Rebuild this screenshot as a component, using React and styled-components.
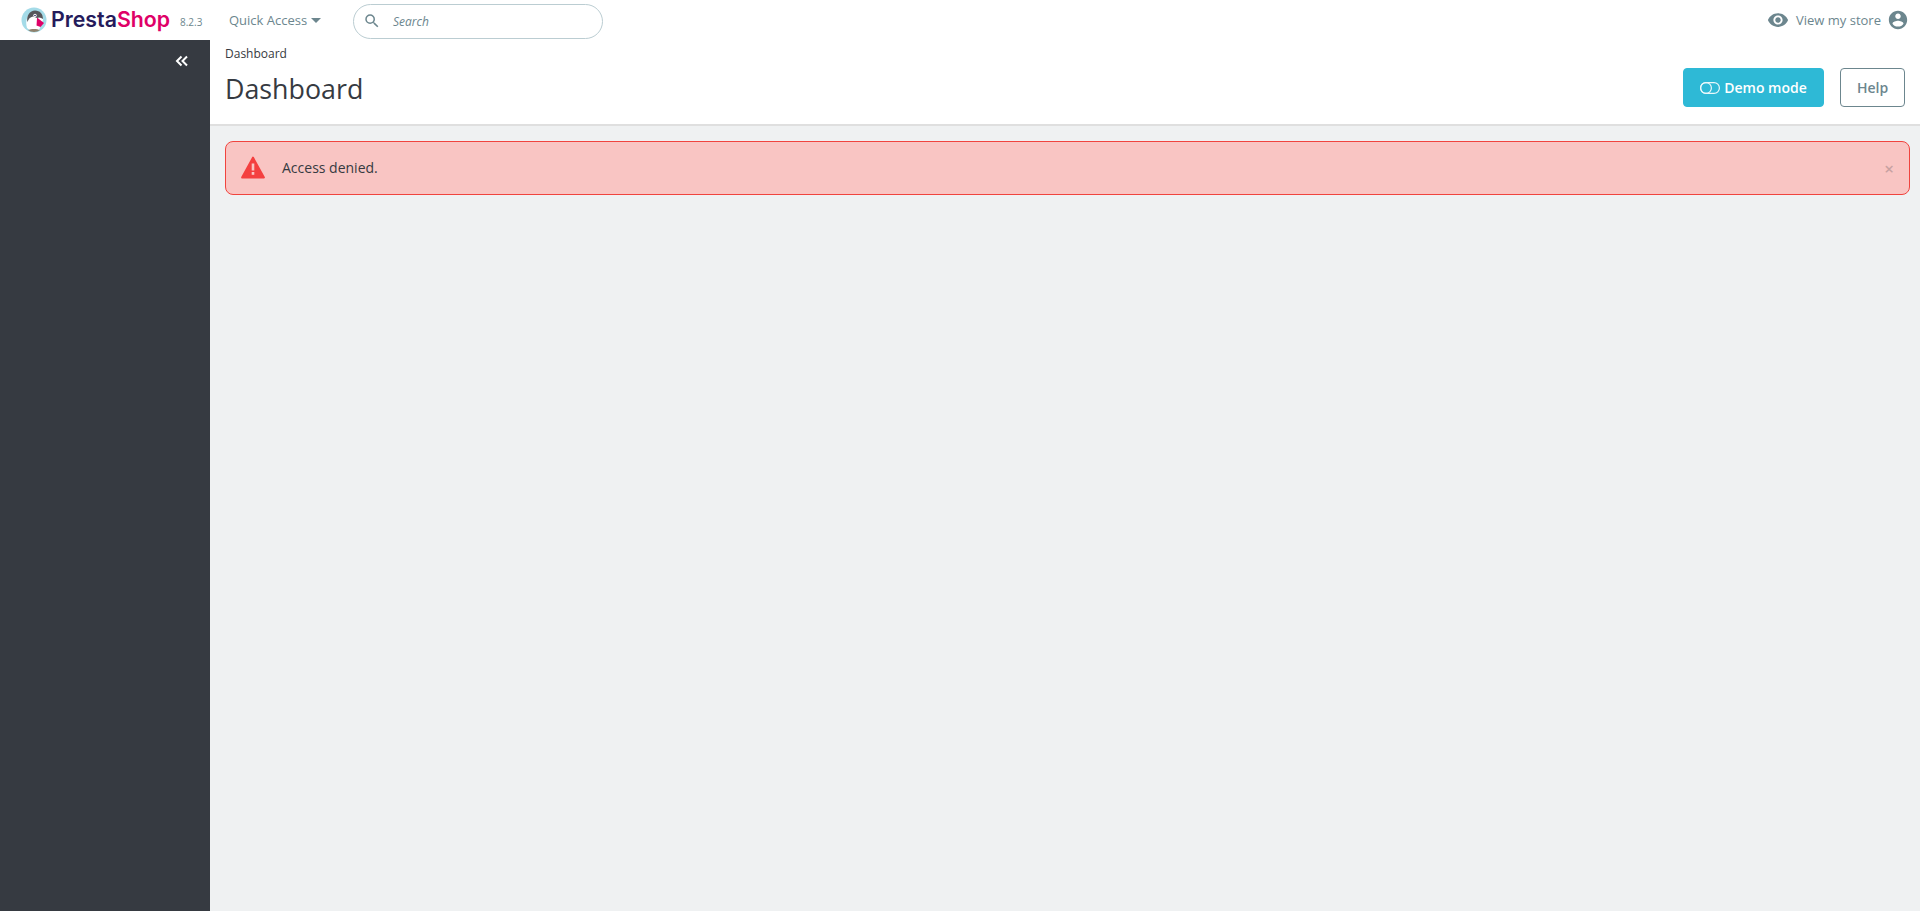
import React from "react";
import styled, { createGlobalStyle } from "styled-components";

const GlobalStyle = createGlobalStyle`
  html, body {
    margin: 0;
    height: 100%;
  }
  body {
    font-family: "Open Sans", "Liberation Sans", sans-serif;
    font-size: 14px;
    color: #363a41;
    background-color: #eff1f2;
  }
`;

const Page = styled.div`
  display: flex;
  flex-direction: column;
  height: 911px;
  overflow: hidden;
`;

const TopBar = styled.header`
  display: flex;
  align-items: center;
  height: 40px;
  flex-shrink: 0;
  background-color: #fff;
  padding: 0 11px 0 21px;
`;

const Logo = styled.div`
  display: flex;
  align-items: center;
  width: 148px;
`;

const LogoText = styled.span`
  font-family: "Inter", sans-serif;
  font-size: 21.3px;
  font-weight: 600;
  margin-left: 4px;
  color: #251b5b;
  line-height: 1;
`;

const LogoPink = styled.span`
  color: #df0067;
`;

const Version = styled.span`
  font-size: 10px;
  color: #6c868e;
  margin: 3px 0 0 11px;
  width: 27px;
  flex-shrink: 0;
`;

const QuickAccess = styled.div`
  display: flex;
  align-items: center;
  gap: 4px;
  margin-left: 22px;
  width: 124px;
  font-size: 13px;
  color: #6c868e;
`;

const Caret = styled.span`
  width: 0;
  height: 0;
  border-left: 5px solid transparent;
  border-right: 5px solid transparent;
  border-top: 5px solid #6c868e;
`;

const SearchBox = styled.div`
  display: flex;
  align-items: center;
  width: 250px;
  height: 35px;
  box-sizing: border-box;
  margin-top: 2px;
  border: 1px solid #bbcdd2;
  border-radius: 18px;
  padding-left: 9px;
  gap: 12px;
  font-size: 12px;
  font-style: italic;
  color: #6c868e;
`;

const RightTools = styled.div`
  display: flex;
  align-items: center;
  margin-left: auto;
  font-size: 13px;
  color: #6c868e;
`;

const StoreLabel = styled.span`
  margin: 0 6px 0 7px;
`;

const Body = styled.div`
  display: flex;
  flex: 1;
  min-height: 0;
`;

const Sidebar = styled.nav`
  display: flex;
  justify-content: flex-end;
  width: 210px;
  flex-shrink: 0;
  padding: 12px 19px 0 0;
  box-sizing: border-box;
  background-color: #363a41;
`;

const Main = styled.main`
  flex: 1;
  min-width: 0;
`;

const PageHead = styled.div`
  height: 86px;
  box-sizing: border-box;
  padding: 6px 15px 0;
  background-color: #fff;
  border-bottom: 2px solid #dfdfdf;
`;

const Breadcrumb = styled.div`
  font-size: 12px;
  line-height: 16px;
  color: #363a41;
`;

const TitleRow = styled.div`
  display: flex;
  align-items: flex-start;
  justify-content: space-between;
  margin-top: 4px;
`;

const Title = styled.h1`
  margin: 5px 0 0;
  font-size: 26.8px;
  font-weight: 400;
  line-height: 36px;
  color: #363a41;
`;

const Actions = styled.div`
  display: flex;
  gap: 16px;
  margin-top: 2px;
`;

const Button = styled.div`
  display: flex;
  align-items: center;
  justify-content: center;
  gap: 4px;
  height: 39px;
  box-sizing: border-box;
  width: ${(p) => p.$width}px;
  border-radius: 4px;
  font-size: 14px;
  font-weight: 600;
  color: ${(p) => (p.$primary ? "#fff" : "#6c868e")};
  background-color: ${(p) => (p.$primary ? "#2eb9d6" : "#fff")};
  border: 1px solid ${(p) => (p.$primary ? "#2eb9d6" : "#6c868e")};
`;

const Alert = styled.div`
  display: flex;
  align-items: center;
  height: 54px;
  box-sizing: border-box;
  margin: 15px 10px 0 15px;
  padding: 0 15px 2px 15px;
  border: 1px solid #f0443e;
  border-radius: 8px;
  background-color: #f9c5c3;
`;

const AlertText = styled.span`
  margin-left: 17px;
  font-size: 14px;
  color: #363a41;
`;

const CloseMark = styled.span`
  margin: 2px 0 0 auto;
  font-size: 17px;
  font-weight: 600;
  line-height: 1;
  color: #363a41;
  opacity: 0.25;
`;

const PuffinLogo = () => (
  <svg width="26" height="26" viewBox="0 0 26 26" style={{ flexShrink: 0 }}>
    <circle cx="13" cy="13" r="12.5" fill="#a4dbe8" />
    <path d="M6 21 C4 14 6 6 13 5 C19 4 22 8 22 13 L18 23 L10 24 Z" fill="#fff" />
    <path d="M6.5 15 C5 9 9 3.5 14 3.5 C19 3.5 22 7 22 12 C20 10.5 18 10 16 11 L12 9.5 C9 10 7.5 12 6.5 15 Z" fill="#55565a" />
    <circle cx="14" cy="8.5" r="1.7" fill="#fff" />
    <circle cx="14" cy="8.5" r="0.8" fill="#251b5b" />
    <path d="M16 10.5 L23 16 L19.5 20 L15.5 18.5 Z" fill="#df0067" />
    <path d="M7 23 C10 21.5 16 21.5 19 23 C16 25.6 10 25.6 7 23 Z" fill="#8f826e" />
  </svg>
);

const SearchIcon = () => (
  <svg width="18" height="18" viewBox="0 0 24 24" fill="#6c868e">
    <path d="M15.5 14h-.79l-.28-.27A6.47 6.47 0 0 0 16 9.5 6.5 6.5 0 1 0 9.5 16c1.61 0 3.09-.59 4.23-1.57l.27.28v.79l5 4.99L20.49 19l-4.99-5zm-6 0C7.01 14 5 11.99 5 9.5S7.01 5 9.5 5 14 7.01 14 9.5 11.99 14 9.5 14z" />
  </svg>
);

const EyeIcon = () => (
  <svg width="22" height="22" viewBox="0 0 24 24" fill="#6c868e">
    <path d="M12 4.5C7 4.5 2.73 7.61 1 12c1.73 4.39 6 7.5 11 7.5s9.27-3.11 11-7.5c-1.73-4.39-6-7.5-11-7.5zM12 17c-2.76 0-5-2.24-5-5s2.24-5 5-5 5 2.24 5 5-2.24 5-5 5zm0-8c-1.66 0-3 1.34-3 3s1.34 3 3 3 3-1.34 3-3-1.34-3-3-3z" />
  </svg>
);

const AccountIcon = () => (
  <svg width="22" height="22" viewBox="0 0 24 24" fill="#6c868e">
    <path d="M12 2C6.48 2 2 6.48 2 12s4.48 10 10 10 10-4.48 10-10S17.52 2 12 2zm0 3c1.66 0 3 1.34 3 3s-1.34 3-3 3-3-1.34-3-3 1.34-3 3-3zm0 14.2c-2.5 0-4.71-1.28-6-3.22.03-1.99 4-3.08 6-3.08 1.99 0 5.97 1.09 6 3.08-1.29 1.94-3.5 3.22-6 3.22z" />
  </svg>
);

const ChevronsIcon = () => (
  <svg width="18" height="18" viewBox="0 0 18 18" fill="none" stroke="#fff" strokeWidth="2">
    <path d="M8.5 4.5 L4 9 L8.5 13.5" />
    <path d="M14 4.5 L9.5 9 L14 13.5" />
  </svg>
);

const ToggleIcon = () => (
  <svg width="20" height="12" viewBox="0 0 20 12" fill="none" stroke="#fff" strokeWidth="1.2" opacity="0.9">
    <rect x="0.6" y="0.6" width="18.8" height="10.8" rx="5.4" />
    <circle cx="6" cy="6" r="5.4" />
  </svg>
);

const WarningIcon = () => (
  <svg width="24" height="23" viewBox="0 0 24 23">
    <path d="M12 1.5 L23 21.5 H1 Z" fill="#f44040" stroke="#f44040" strokeWidth="1.8" strokeLinejoin="round" />
    <rect x="10.7" y="7.5" width="2.6" height="7" fill="#f9c5c3" />
    <rect x="10.7" y="16" width="2.6" height="2.8" fill="#f9c5c3" />
  </svg>
);

const App = () => {
  return (
    <Page>
      <GlobalStyle />
      <TopBar>
        <Logo>
          <PuffinLogo />
          <LogoText>
            Presta<LogoPink>Shop</LogoPink>
          </LogoText>
        </Logo>
        <Version>8.2.3</Version>
        <QuickAccess>
          Quick Access <Caret />
        </QuickAccess>
        <SearchBox>
          <SearchIcon />
          Search
        </SearchBox>
        <RightTools>
          <EyeIcon />
          <StoreLabel>View my store</StoreLabel>
          <AccountIcon />
        </RightTools>
      </TopBar>
      <Body>
        <Sidebar>
          <ChevronsIcon />
        </Sidebar>
        <Main>
          <PageHead>
            <Breadcrumb>Dashboard</Breadcrumb>
            <TitleRow>
              <Title>Dashboard</Title>
              <Actions>
                <Button $primary $width={141}>
                  <ToggleIcon />
                  Demo mode
                </Button>
                <Button $width={65}>Help</Button>
              </Actions>
            </TitleRow>
          </PageHead>
          <Alert>
            <WarningIcon />
            <AlertText>Access denied.</AlertText>
            <CloseMark>×</CloseMark>
          </Alert>
        </Main>
      </Body>
    </Page>
  );
};

export default App;
